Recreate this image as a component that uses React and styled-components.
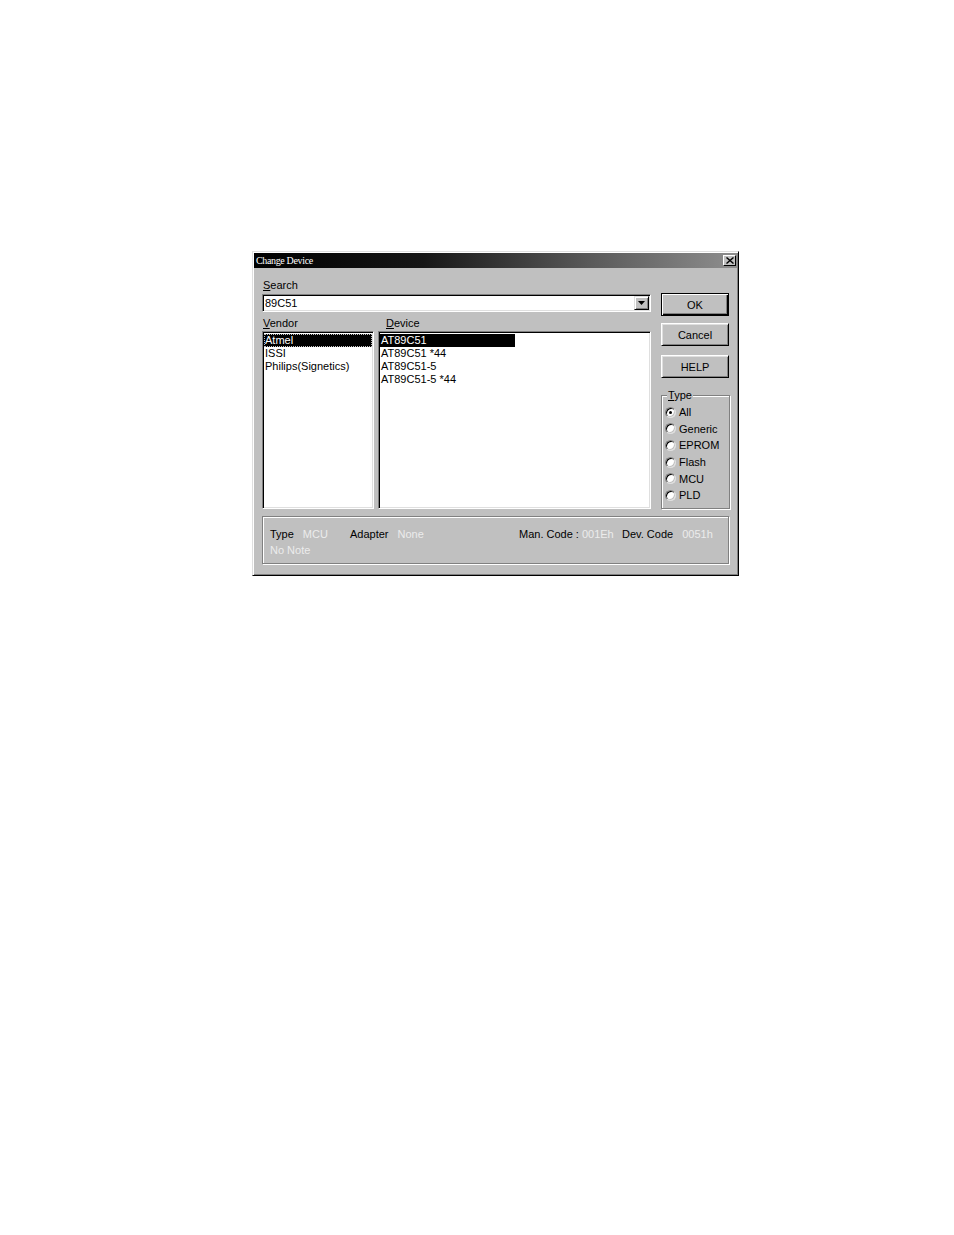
import React from 'react'
import styled, { createGlobalStyle } from 'styled-components'

const GlobalStyle = createGlobalStyle`
  html, body {
    margin: 0;
    padding: 0;
    background: #ffffff;
  }
  body {
    font-family: "Liberation Sans", Arial, sans-serif;
    font-size: 11px;
    color: #000;
  }
`

const Page = styled.div`
  padding: 251px 0 0 252px;
  min-height: 1235px;
  box-sizing: border-box;
`

const Dialog = styled.div`
  width: 487px;
  box-sizing: border-box;
  background: #c0c0c0;
  border: 1px solid;
  border-color: #dfdfdf #000 #000 #dfdfdf;
  box-shadow: inset 1px 1px #fff, inset -1px -1px #808080;
  padding: 1px;
  display: flex;
  flex-direction: column;
`

const TitleBar = styled.div`
  height: 15px;
  display: flex;
  align-items: center;
  justify-content: space-between;
  padding: 0 1px 0 2px;
  background: linear-gradient(to right, #000 0%, #161616 35%, #5a5a5a 70%, #8e8e8e 100%);
`

const TitleText = styled.span`
  color: #fff;
  font-family: "Liberation Serif", "Times New Roman", serif;
  font-size: 10px;
  letter-spacing: -0.35px;
`

const CloseButton = styled.div`
  width: 13px;
  height: 11px;
  box-sizing: border-box;
  background: #c0c0c0;
  border: 1px solid;
  border-color: #fff #000 #000 #fff;
  display: flex;
  align-items: center;
  justify-content: center;
`

const Body = styled.div`
  padding: 11px 8px 10px 8px;
  display: flex;
  flex-direction: column;
`

const TopRow = styled.div`
  display: flex;
  gap: 10px;
`

const LeftColumn = styled.div`
  width: 389px;
  display: flex;
  flex-direction: column;
`

const RightColumn = styled.div`
  width: 68px;
  padding-top: 14px;
  display: flex;
  flex-direction: column;
`

const Label = styled.div`
  height: 13px;
  line-height: 13px;
  padding-left: ${p => p.$indent || 1}px;
  white-space: nowrap;
`

const Sunken = styled.div`
  box-sizing: border-box;
  background: #fff;
  border: 1px solid;
  border-color: #808080 #fff #fff #808080;
  box-shadow: inset 1px 1px #000, inset -1px -1px #dfdfdf;
  padding: 1px;
`

const Combo = styled(Sunken)`
  margin-top: 2px;
  height: 18px;
  display: flex;
  align-items: center;
  justify-content: space-between;
`

const ComboText = styled.span`
  padding-left: 1px;
  line-height: 13px;
`

const DropButton = styled.div`
  width: 15px;
  height: 14px;
  box-sizing: border-box;
  background: #c0c0c0;
  border: 1px solid;
  border-color: #dfdfdf #000 #000 #dfdfdf;
  box-shadow: inset 1px 1px #fff, inset -1px -1px #808080;
  display: flex;
  align-items: center;
  justify-content: center;
`

const ListsRow = styled.div`
  margin-top: 5px;
  display: flex;
  gap: 4px;
`

const ListColumn = styled.div`
  width: ${p => p.$width}px;
  display: flex;
  flex-direction: column;
`

const ListBox = styled(Sunken)`
  margin-top: 1px;
  height: 178px;
  padding: 2px 1px 1px 1px;
`

const ListItem = styled.div`
  height: 13px;
  line-height: 13px;
  padding-left: 1px;
  box-sizing: border-box;
  white-space: nowrap;
  width: ${p => (p.$width ? `${p.$width}px` : 'auto')};
  background: ${p => (p.$selected ? '#000' : 'transparent')};
  color: ${p => (p.$selected ? '#fff' : '#000')};
  outline: ${p => (p.$focused ? '1px dotted #c0c0c0' : 'none')};
  outline-offset: -1px;
`

const Button = styled.button`
  margin: ${p => p.$top || 0}px 0 0 0;
  width: 68px;
  height: 23px;
  box-sizing: border-box;
  padding: 0;
  font-family: "Liberation Sans", Arial, sans-serif;
  font-size: 11px;
  color: #000;
  background: #c0c0c0;
  border: 1px solid;
  border-color: ${p => (p.$default ? '#000' : '#fff #000 #000 #fff')};
  box-shadow: ${p =>
    p.$default
      ? 'inset 1px 1px #fff, inset -1px -1px #000, inset -2px -2px #808080'
      : 'inset 1px 1px #dfdfdf, inset -1px -1px #808080'};
`

const GroupBox = styled.fieldset`
  margin: 11px 0 0 0;
  height: 120px;
  width: 69px;
  box-sizing: border-box;
  padding: 2px 0 0 3px;
  border: 1px solid #808080;
  box-shadow: inset 1px 1px #fff, 1px 1px #fff;
`

const Legend = styled.legend`
  padding: 0 1px;
  margin-left: 2px;
  height: 13px;
  line-height: 13px;
  background: #c0c0c0;
`

const RadioRow = styled.div`
  height: 16.6px;
  display: flex;
  align-items: center;
  gap: 3px;
  white-space: nowrap;
`

const RadioDot = styled.span`
  width: 11px;
  height: 11px;
  box-sizing: border-box;
  border-radius: 50%;
  background: #fff;
  border: 1px solid;
  border-color: #808080 #dfdfdf #dfdfdf #808080;
  box-shadow: inset 1px 1px #000, inset -1px -1px #c0c0c0;
  display: flex;
  align-items: center;
  justify-content: center;

  &::after {
    content: '';
    width: 3px;
    height: 3px;
    border-radius: 50%;
    background: ${p => (p.$checked ? '#000' : 'transparent')};
  }
`

const InfoPanel = styled.div`
  margin-top: 7px;
  height: 48px;
  box-sizing: border-box;
  border: 1px solid #808080;
  box-shadow: inset 1px 1px #fff, 1px 1px #fff;
  padding: 9px 0 0 7px;
  display: flex;
  flex-direction: column;
`

const InfoLine = styled.div`
  height: 16px;
  line-height: 16px;
  display: flex;
  white-space: nowrap;
`

const InfoItem = styled.div`
  width: ${p => (p.$width ? `${p.$width}px` : 'auto')};
  display: flex;
  gap: ${p => (p.$gap !== undefined ? p.$gap : 9)}px;
`

const Value = styled.span`
  color: #ececec;
`

const vendors = ['Atmel', 'ISSI', 'Philips(Signetics)']
const devices = ['AT89C51', 'AT89C51 *44', 'AT89C51-5', 'AT89C51-5 *44']
const types = ['All', 'Generic', 'EPROM', 'Flash', 'MCU', 'PLD']

export default function App() {
  return (
    <Page>
      <GlobalStyle />
      <Dialog>
        <TitleBar>
          <TitleText>Change Device</TitleText>
          <CloseButton>
            <svg width="8" height="7" viewBox="0 0 8 7">
              <path d="M0.5 0.5 L7.5 6.5 M7.5 0.5 L0.5 6.5" stroke="#000" strokeWidth="1.4" />
            </svg>
          </CloseButton>
        </TitleBar>
        <Body>
          <TopRow>
            <LeftColumn>
              <Label>
                <u>S</u>earch
              </Label>
              <Combo>
                <ComboText>89C51</ComboText>
                <DropButton>
                  <svg width="7" height="4" viewBox="0 0 7 4">
                    <path d="M0 0 H7 L3.5 4 Z" fill="#000" />
                  </svg>
                </DropButton>
              </Combo>
              <ListsRow>
                <ListColumn $width={112}>
                  <Label>
                    <u>V</u>endor
                  </Label>
                  <ListBox>
                    {vendors.map((v, i) => (
                      <ListItem key={v} $selected={i === 0} $focused={i === 0}>
                        {v}
                      </ListItem>
                    ))}
                  </ListBox>
                </ListColumn>
                <ListColumn $width={273}>
                  <Label $indent={8}>
                    <u>D</u>evice
                  </Label>
                  <ListBox>
                    {devices.map((d, i) => (
                      <ListItem key={d} $selected={i === 0} $width={135}>
                        {d}
                      </ListItem>
                    ))}
                  </ListBox>
                </ListColumn>
              </ListsRow>
            </LeftColumn>
            <RightColumn>
              <Button $default>OK</Button>
              <Button $top={7}>Cancel</Button>
              <Button $top={9}>HELP</Button>
              <GroupBox>
                <Legend>
                  <u>T</u>ype
                </Legend>
                {types.map((t, i) => (
                  <RadioRow key={t}>
                    <RadioDot $checked={i === 0} />
                    {t}
                  </RadioRow>
                ))}
              </GroupBox>
            </RightColumn>
          </TopRow>
          <InfoPanel>
            <InfoLine>
              <InfoItem $width={80}>
                Type <Value>MCU</Value>
              </InfoItem>
              <InfoItem $width={169}>
                Adapter <Value>None</Value>
              </InfoItem>
              <InfoItem $width={103} $gap={3}>
                Man. Code : <Value>001Eh</Value>
              </InfoItem>
              <InfoItem>
                Dev. Code <Value>0051h</Value>
              </InfoItem>
            </InfoLine>
            <InfoLine>
              <Value>No Note</Value>
            </InfoLine>
          </InfoPanel>
        </Body>
      </Dialog>
    </Page>
  )
}
